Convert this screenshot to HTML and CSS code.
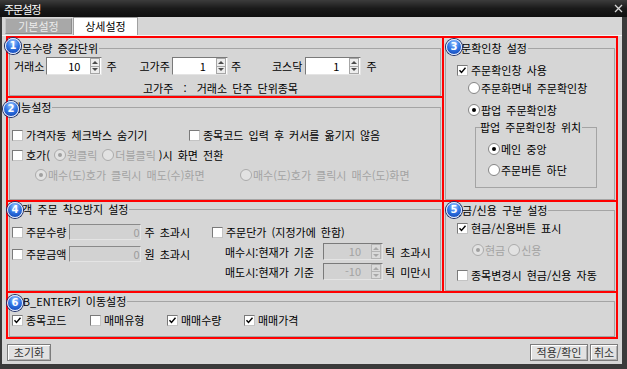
FILE: index.html
```html
<!DOCTYPE html>
<html lang="ko">
<head>
    <meta charset="UTF-8">
    <meta name="viewport" content="width=device-width, initial-scale=1.0">
    <title>주문설정</title>
    <link rel="stylesheet" href="styles.css">
</head>
<body>
<div class="window">
    <!-- Title bar -->
    <div class="titlebar">
        <span class="title">주문설정</span>
        <svg class="close" width="9" height="9" viewBox="0 0 9 9"><path d="M1 1L8 8M8 1L1 8" stroke="#d8d8d8" stroke-width="1.3"/></svg>
    </div>

    <div class="client">
        <div class="tabs">
            <div class="tab">기본설정</div>
            <div class="tab active">상세설정</div>
        </div>

        <div class="panel">
            <!-- 1. 주문수량 증감단위 -->
            <div class="box box1">
                <span class="badge b1">1</span>
                <fieldset class="group g1">
                    <legend>주문수량 증감단위</legend>
                    <div class="qty-row">
                        <span>거래소</span>
                        <span class="spin s1"><span class="val">10</span><span class="arrows"><i class="up"></i><i class="down"></i></span></span>
                        <span class="u1">주</span>
                        <span class="l2">고가주</span>
                        <span class="spin s2"><span class="val">1</span><span class="arrows"><i class="up"></i><i class="down"></i></span></span>
                        <span class="u2">주</span>
                        <span class="l3">코스닥</span>
                        <span class="spin s3"><span class="val">1</span><span class="arrows"><i class="up"></i><i class="down"></i></span></span>
                        <span class="u3">주</span>
                    </div>
                    <div class="note">고가주&nbsp; :&nbsp; 거래소 단주 단위종목</div>
                </fieldset>
            </div>

            <!-- 2. 기능설정 -->
            <div class="box box2">
                <span class="badge b2">2</span>
                <fieldset class="group g2">
                    <legend>기능설정</legend>
                    <div class="row r2a">
                        <span class="opt w177"><span class="cb"></span>가격자동 체크박스 숨기기</span>
                        <span class="opt"><span class="cb"></span>종목코드 입력 후 커서를 옮기지 않음</span>
                    </div>
                    <div class="row r2b">
                        <span class="opt"><span class="cb"></span>호가(</span>
                        <span class="opt dis hoga1"><span class="rd on"></span>원클릭</span>
                        <span class="opt dis hoga2"><span class="rd"></span>더블클릭</span>
                        <span class="hoga3">)시 화면 전환</span>
                    </div>
                    <div class="row r2c">
                        <span class="opt dis w205"><span class="rd on"></span>매수(도)호가 클릭시 매도(수)화면</span>
                        <span class="opt dis"><span class="rd"></span>매수(도)호가 클릭시 매수(도)화면</span>
                    </div>
                </fieldset>
            </div>

            <!-- 3. 주문확인창 설정 -->
            <div class="box box3">
                <span class="badge b3">3</span>
                <fieldset class="group g3">
                    <legend>주문확인창 설정</legend>
                    <div class="row r3a">
                        <span class="opt"><span class="cb"><svg width="9" height="9" viewBox="0 0 9 9"><path d="M1.5 4.2l2 2.2 4-4.6" fill="none" stroke="#000" stroke-width="1.4"/></svg></span>주문확인창 사용</span>
                    </div>
                    <div class="row r3b">
                        <span class="opt"><span class="rd"></span>주문화면내 주문확인창</span>
                    </div>
                    <div class="row r3c">
                        <span class="opt"><span class="rd on"></span>팝업 주문확인창</span>
                    </div>
                    <fieldset class="inner">
                        <legend>팝업 주문확인창 위치</legend>
                        <div class="row r3d">
                            <span class="opt"><span class="rd on"></span>메인 중앙</span>
                        </div>
                        <div class="row r3e">
                            <span class="opt"><span class="rd"></span>주문버튼 하단</span>
                        </div>
                    </fieldset>
                </fieldset>
            </div>

            <!-- 4. 고객 주문 착오방지 설정 -->
            <div class="box box4">
                <span class="badge b4">4</span>
                <fieldset class="group g4">
                    <legend>고객 주문 착오방지 설정</legend>
                    <div class="cols">
                        <div class="col-l">
                            <div class="frow fr1">
                                <span class="opt"><span class="cb"></span>주문수량</span>
                                <span class="field">0</span>
                                <span class="after">주 초과시</span>
                            </div>
                            <div class="frow fr2">
                                <span class="opt"><span class="cb"></span>주문금액</span>
                                <span class="field">0</span>
                                <span class="after">원 초과시</span>
                            </div>
                        </div>
                        <div class="col-r">
                            <div class="row r4a">
                                <span class="opt"><span class="cb"></span>주문단가 (지정가에 한함)</span>
                            </div>
                            <div class="trow tr1">
                                <span class="tlabel">매수시:현재가 기준</span>
                                <span class="spin dis s4"><span class="val">10</span><span class="arrows"><i class="up"></i><i class="down"></i></span></span>
                                <span class="after2">틱 초과시</span>
                            </div>
                            <div class="trow tr2">
                                <span class="tlabel">매도시:현재가 기준</span>
                                <span class="spin dis s4"><span class="val">-10</span><span class="arrows"><i class="up"></i><i class="down"></i></span></span>
                                <span class="after2">틱 미만시</span>
                            </div>
                        </div>
                    </div>
                </fieldset>
            </div>

            <!-- 5. 현금/신용 구분 설정 -->
            <div class="box box5">
                <span class="badge b5">5</span>
                <fieldset class="group g5">
                    <legend>현금/신용 구분 설정</legend>
                    <div class="row r5a">
                        <span class="opt"><span class="cb"><svg width="9" height="9" viewBox="0 0 9 9"><path d="M1.5 4.2l2 2.2 4-4.6" fill="none" stroke="#000" stroke-width="1.4"/></svg></span>현금/신용버튼 표시</span>
                    </div>
                    <div class="row r5b">
                        <span class="opt dis"><span class="rd on"></span>현금</span>
                        <span class="opt dis cash2"><span class="rd"></span>신용</span>
                    </div>
                    <div class="row r5c">
                        <span class="opt"><span class="cb"></span>종목변경시 현금/신용 자동</span>
                    </div>
                </fieldset>
            </div>

            <!-- 6. TAB_ENTER키 이동설정 -->
            <div class="box box6">
                <span class="badge b6">6</span>
                <fieldset class="group g6">
                    <legend>TAB_ENTER키 이동설정</legend>
                    <div class="row r6a">
                        <span class="opt w78"><span class="cb"><svg width="9" height="9" viewBox="0 0 9 9"><path d="M1.5 4.2l2 2.2 4-4.6" fill="none" stroke="#000" stroke-width="1.4"/></svg></span>종목코드</span>
                        <span class="opt w77"><span class="cb"></span>매매유형</span>
                        <span class="opt w77"><span class="cb"><svg width="9" height="9" viewBox="0 0 9 9"><path d="M1.5 4.2l2 2.2 4-4.6" fill="none" stroke="#000" stroke-width="1.4"/></svg></span>매매수량</span>
                        <span class="opt"><span class="cb"><svg width="9" height="9" viewBox="0 0 9 9"><path d="M1.5 4.2l2 2.2 4-4.6" fill="none" stroke="#000" stroke-width="1.4"/></svg></span>매매가격</span>
                    </div>
                </fieldset>
            </div>
        </div>

        <!-- Buttons -->
        <div class="footer">
            <button class="btn reset">초기화</button>
            <div class="right-btns">
                <button class="btn apply">적용/확인</button>
                <button class="btn cancel">취소</button>
            </div>
        </div>
    </div>
</div>
</body>
</html>
```

FILE: styles.css
```css
body {
    margin: 0;
    background: #3a3a3a;
    font-family: "Noto Sans CJK KR", sans-serif;
    font-size: 11px;
    line-height: 14px;
    color: #000;
    word-spacing: 2px;
}
.window {
    width: 627px;
    height: 369px;
    display: flex;
    flex-direction: column;
}
/* Title bar */
.titlebar {
    height: 17px;
    flex: none;
    display: flex;
    align-items: center;
    justify-content: space-between;
    padding: 0 4px;
    background: linear-gradient(#3c3c3c, #1a1a1a 50%, #0f0f0f);
    color: #fff;
}
.title {
    letter-spacing: -1px;
}
.client {
    flex: 1;
    margin: 0 5px 5px 2px;
    background: #d6d6d6;
    display: flex;
    flex-direction: column;
}
/* Tabs */
.tabs {
    flex: none;
    display: flex;
    align-items: flex-end;
    height: 18px;
    padding-left: 3px;
    border-bottom: 1px solid #f4f4f4;
}
.tab {
    box-sizing: border-box;
    width: 67px;
    height: 16px;
    margin-bottom: 1px;
    background: #a8a8a8;
    color: #ececec;
    border: 1px solid;
    border-color: #c6c6c6 #8c8c8c #8c8c8c #c6c6c6;
    text-align: center;
    line-height: 14px;
}
.tab.active {
    width: 65px;
    height: 18px;
    margin: 0 0 0 1px;
    background: #fff;
    color: #000;
    border-color: #a0a0a0;
    border-bottom: 0;
    line-height: 17px;
}
/* Red grid of setting groups */
.panel {
    flex: none;
    display: grid;
    grid-template-columns: 434px 172px;
    grid-template-rows: 58px 102px 89px 44px;
    gap: 2px;
    padding: 2px;
    margin: 0 4px;
    background: #ff0000;
}
.box {
    position: relative;
    display: flex;
    flex-direction: column;
    padding: 0 1px;
    background: #d6d6d6;
}
.box1 { grid-column: 1; grid-row: 1; }
.box2 { grid-column: 1; grid-row: 2; }
.box3 { grid-column: 2; grid-row: 1 / 3; }
.box4 { grid-column: 1; grid-row: 3; }
.box5 { grid-column: 2; grid-row: 3; }
.box6 { grid-column: 1 / 3; grid-row: 4; }

.group {
    flex: 1;
    min-width: 0;
    margin: 0;
    padding: 0;
    border: 1px solid #a4a4a4;
}
.group legend,
.inner legend {
    padding: 0 1px 0 0;
    margin-left: 2px;
    line-height: 14px;
}
.g1 { margin-top: 3px; }
.g2 { margin-top: 2px; }
.g2 legend { margin-left: 1px; }
.g3 { margin-top: 3px; }
.g3 > legend { margin-left: 5px; }
.g4 { margin-top: 0; }
.g5 { margin-top: 1px; }
.g5 legend { margin-left: 6px; }
.g6 { margin-top: 1px; }
.g6 legend { margin-left: 0; }

/* Number badges */
.badge {
    position: absolute;
    z-index: 2;
    box-sizing: border-box;
    width: 16px;
    height: 16px;
    border-radius: 50%;
    border: 1px solid #dfe9ff;
    box-shadow: 0 0 0 1px #1c2d66;
    background: radial-gradient(circle at 50% 25%, #9cc8ff 0, #3479e8 45%, #0c3caa 100%);
    color: #fff;
    font: bold 10px/14px "DejaVu Sans", sans-serif;
    text-align: center;
    word-spacing: 0;
}
.b1 { left: -3px; top: 0; }
.b2 { left: -5px; top: 3px; }
.b3 { left: 2px; top: 1px; }
.b4 { left: -1px; top: 0; }
.b5 { left: 2px; top: 0; }
.b6 { left: -1px; top: 2px; }

/* Common controls */
.row {
    display: flex;
    align-items: center;
    height: 14px;
    white-space: nowrap;
}
.opt {
    display: inline-flex;
    align-items: center;
    white-space: nowrap;
}
.dis {
    color: #a3a3a3;
}
.cb {
    box-sizing: border-box;
    width: 11px;
    height: 11px;
    margin-right: 3px;
    display: inline-flex;
    align-items: center;
    justify-content: center;
    background: #fff;
    border: 1px solid;
    border-color: #7a7a7a #c4c4c4 #c4c4c4 #7a7a7a;
}
.rd {
    box-sizing: border-box;
    width: 12px;
    height: 12px;
    margin-right: 1px;
    border-radius: 50%;
    border: 1px solid #858585;
    background: #fff;
    display: inline-flex;
    align-items: center;
    justify-content: center;
}
.rd.on::after {
    content: "";
    width: 4px;
    height: 4px;
    border-radius: 50%;
    background: #000;
}
.dis .rd {
    border-color: #ababab;
    background: #e2e2e2;
}
.dis .rd.on::after {
    background: #a0a0a0;
}

/* Spin edit */
.spin {
    box-sizing: border-box;
    display: inline-flex;
    height: 18px;
    background: #fff;
    border: 1px solid;
    border-color: #7a7a7a #e4e4e4 #e4e4e4 #7a7a7a;
}
.spin .val {
    flex: 1;
    text-align: right;
    padding-right: 10px;
    line-height: 16px;
}
.spin .arrows {
    width: 10px;
    margin-right: 1px;
    display: flex;
    flex-direction: column;
}
.spin .arrows i {
    flex: 1;
    display: flex;
    align-items: center;
    justify-content: center;
    background: #ededed;
    border: 1px solid #a6a6a6;
}
.spin .arrows i + i {
    border-top: 0;
}
.spin .up::after {
    content: "";
    border-left: 3px solid transparent;
    border-right: 3px solid transparent;
    border-bottom: 3px solid #4a4a4a;
}
.spin .down::after {
    content: "";
    border-left: 3px solid transparent;
    border-right: 3px solid transparent;
    border-top: 3px solid #4a4a4a;
}
.spin.dis {
    background: #d2d2d2;
    height: 17px;
}
.spin.dis .val {
    line-height: 15px;
}
.spin.dis .arrows i {
    background: #dadada;
    border-color: #b4b4b4;
}
.spin.dis .up::after { border-bottom-color: #a8a8a8; }
.spin.dis .down::after { border-top-color: #a8a8a8; }

/* 1 */
.qty-row {
    display: flex;
    align-items: center;
    height: 18px;
    margin-top: 2px;
    padding-left: 4px;
    white-space: nowrap;
}
.s1 { margin-left: 2px; width: 56px; }
.s2 { margin-left: 2px; width: 56px; }
.s3 { margin-left: 3px; width: 56px; }
.u1 { margin-left: 4px; }
.l2 { margin-left: 23px; }
.u2 { margin-left: 3px; }
.l3 { margin-left: 31px; }
.u3 { margin-left: 5px; }
.note {
    margin-top: 6px;
    padding-left: 133px;
    white-space: nowrap;
}

/* 2 */
.r2a { margin-top: 14px; padding-left: 2px; }
.r2b { margin-top: 6px; padding-left: 2px; }
.r2c { margin-top: 6px; padding-left: 25px; }
.w177 { width: 177px; }
.w205 { width: 205px; }
.hoga1 { margin-left: 4px; }
.hoga2 { margin-left: 5px; }
.hoga3 { margin-left: 3px; }

/* 3 */
.r3a { margin-top: 8px; padding-left: 11px; }
.r3b { margin-top: 4px; padding-left: 22px; }
.r3c { margin-top: 8px; padding-left: 22px; }
.inner {
    box-sizing: border-box;
    width: 122px;
    margin: 3px 0 0 29px;
    padding: 0 0 10px 0;
    border: 1px solid #a4a4a4;
    min-width: 0;
}
.inner legend { margin-left: 4px; }
.r3d { margin-top: 8px; padding-left: 12px; }
.r3e { margin-top: 7px; padding-left: 12px; }

/* 4 */
.cols {
    display: flex;
}
.col-l {
    width: 202px;
    padding-left: 2px;
    box-sizing: border-box;
}
.frow {
    display: flex;
    align-items: center;
    height: 16px;
    white-space: nowrap;
}
.fr1 { margin-top: 8px; }
.fr2 { margin-top: 6px; }
.field {
    box-sizing: border-box;
    width: 72px;
    height: 16px;
    margin-left: 3px;
    padding-right: 1px;
    text-align: right;
    line-height: 14px;
    color: #9c9c9c;
    background: #d2d2d2;
    border: 1px solid;
    border-color: #8a8a8a #e4e4e4 #e4e4e4 #8a8a8a;
}
.after { margin-left: 3px; }
.r4a { margin-top: 9px; }
.trow {
    display: flex;
    align-items: center;
    height: 17px;
    padding-left: 13px;
    white-space: nowrap;
}
.tr1 { margin-top: 4px; }
.tr2 { margin-top: 3px; }
.tlabel { width: 98px; }
.s4 { width: 60px; }
.after2 { margin-left: 2px; }

/* 5 */
.r5a { margin-top: 4px; padding-left: 11px; }
.r5b { margin-top: 8px; padding-left: 26px; }
.r5c { margin-top: 11px; padding-left: 11px; }
.cash2 { margin-left: 3px; }

/* 6 */
.r6a { margin-top: 5px; padding-left: 2px; }
.w78 { width: 78px; }
.w77 { width: 77px; }

/* Buttons */
.footer {
    flex: none;
    display: flex;
    justify-content: space-between;
    margin: 5px 4px 0 5px;
}
.right-btns {
    display: flex;
    gap: 2px;
}
.btn {
    box-sizing: border-box;
    height: 17px;
    padding: 0;
    font: inherit;
    word-spacing: 0;
    line-height: 15px;
    color: #333;
    background: #e2e2e2;
    border: 1px solid #7c7c7c;
    box-shadow: inset 1px 1px 0 #fff, inset -1px -1px 0 #b2b2b2;
    text-align: center;
}
.reset { width: 44px; }
.apply { width: 58px; }
.cancel { width: 28px; }
```
